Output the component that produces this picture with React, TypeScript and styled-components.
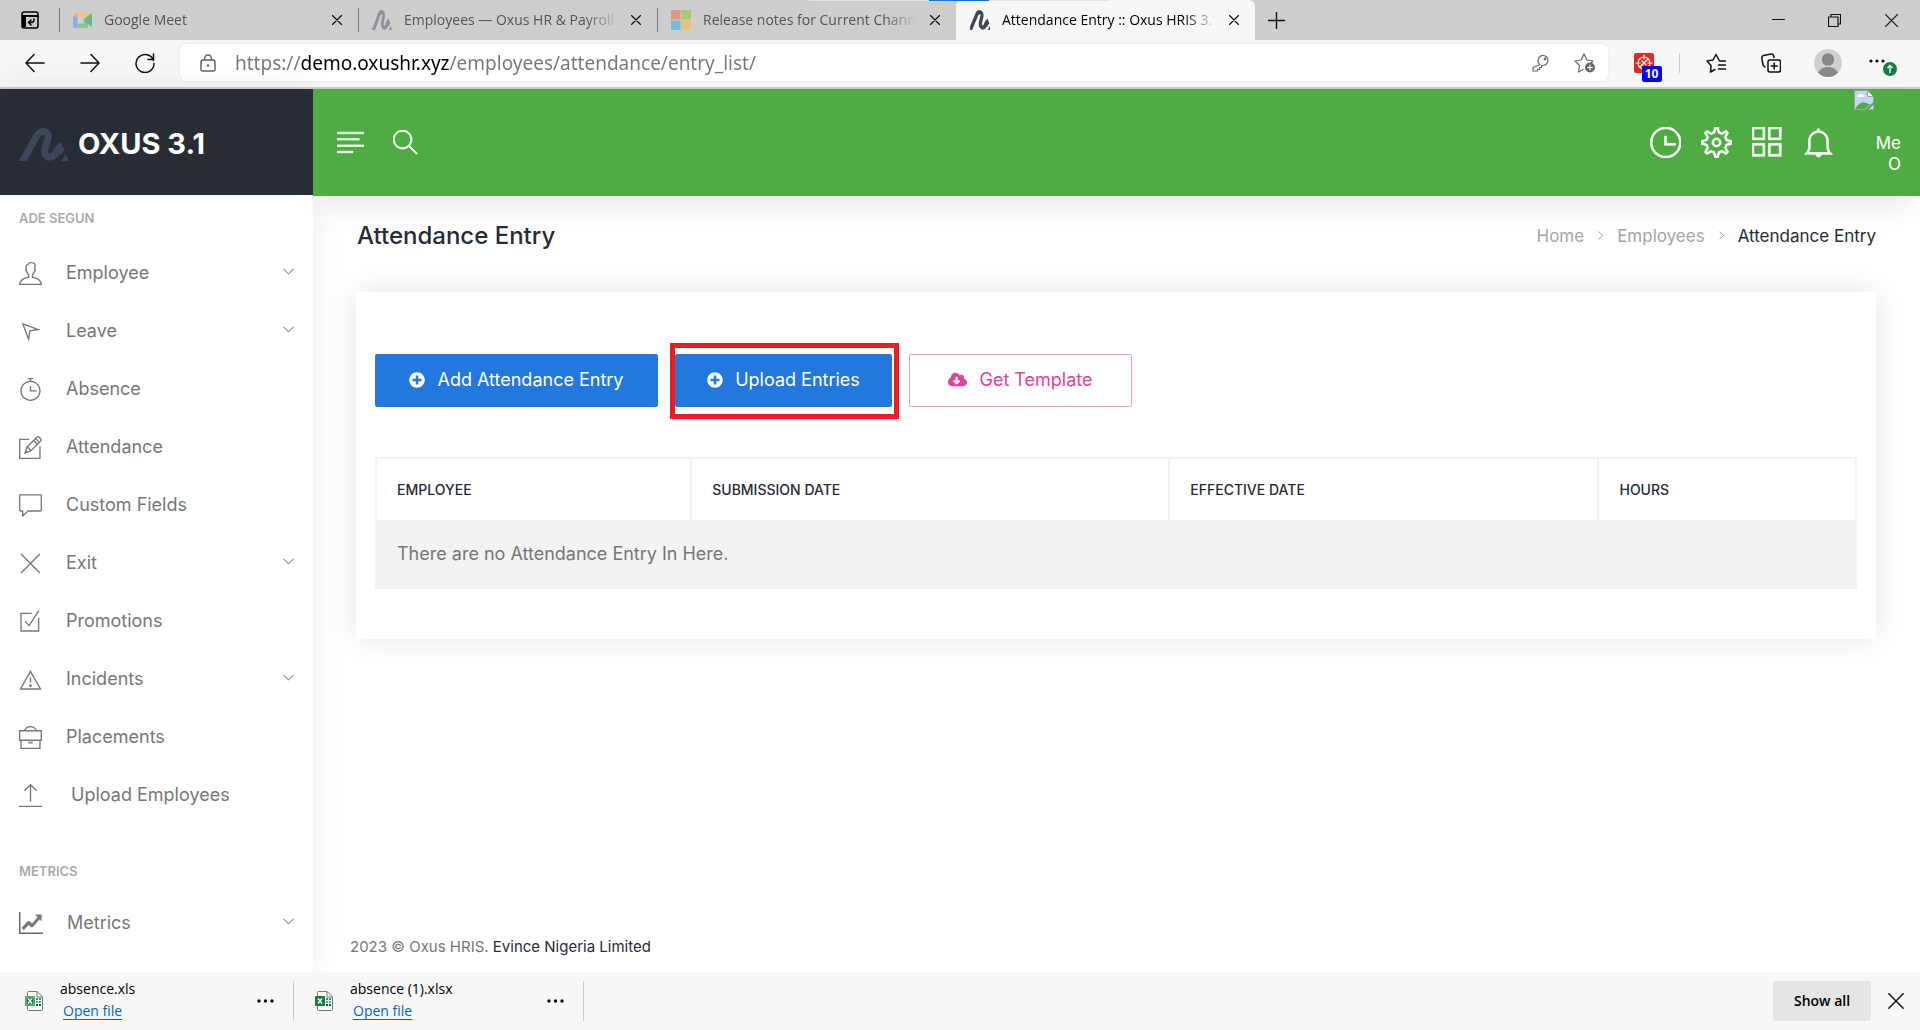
import React, { useState } from 'react';
import styled, { createGlobalStyle, css } from 'styled-components';
import {
  TfiUser, TfiLocationArrow, TfiTimer, TfiPencilAlt, TfiClose, TfiCheckBox, TfiAlert,
  TfiBriefcase, TfiUpload, TfiAngleDown, TfiAngleRight, TfiAlignLeft, TfiSearch, TfiTime,
  TfiSettings, TfiLayoutGrid2, TfiBell,
} from 'react-icons/tfi';
import { FaPlusCircle, FaCloudDownloadAlt } from 'react-icons/fa';

const ui = '"Open Sans", "Noto Sans", sans-serif';
const brand = 'Inter, "Open Sans", sans-serif';

const GlobalStyle = createGlobalStyle`
  *, *::before, *::after { box-sizing: border-box; }
  body { margin: 0; background: #fff; font-family: ${brand}; color: #777; }
  button { font: inherit; color: inherit; border: 0; background: none; padding: 0; cursor: pointer; }
  a { color: inherit; text-decoration: none; }
  svg { display: block; flex: none; }
`;

const Window = styled.div`
  min-height: 100vh;
  display: flex;
  flex-direction: column;
`;

/* ---------- browser frame ---------- */

const TabStrip = styled.div`
  position: relative;
  display: flex;
  align-items: stretch;
  height: 40px;
  background: #cdcdcd;
  font: 14px/20px ${ui};
  color: #555;
`;
const LoadStrip = styled.div`
  position: absolute;
  top: 0;
  left: 809px;
  width: 301px;
  height: 1px;
  background: linear-gradient(90deg, #e4e4e4 0 120px, #0a78d6 120px 180px, #e4e4e4 180px);
`;
const TabMenu = styled.button`
  width: 59px;
  display: grid;
  place-items: center;
  color: #000;
`;
const Tab = styled.div<{ $active?: boolean }>`
  position: relative;
  flex: 0 1 299px;
  min-width: 0;
  display: flex;
  align-items: center;
  padding: 0 11px 0 14px;
  ${p => p.$active
    ? css`background: #f7f7f7; color: #000; border-radius: 6px 6px 0 0;`
    : css`&::before { content: ''; position: absolute; left: 0; top: 8px; bottom: 8px; width: 1px; background: #777; }`}
`;
const TabTitle = styled.span`
  flex: 1;
  min-width: 0;
  margin: 0 8px 0 12px;
  white-space: nowrap;
  overflow: hidden;
  mask-image: linear-gradient(90deg, #000 calc(100% - 32px), transparent);
`;
const IconButton = styled.button<{ $w?: number }>`
  width: ${p => p.$w ?? 20}px;
  height: 100%;
  display: grid;
  place-items: center;
  flex: none;
  color: #111;
`;
const WindowButtons = styled.div`
  margin-left: auto;
  display: flex;
`;
const Toolbar = styled.div`
  display: flex;
  align-items: center;
  height: 49px;
  padding: 5px 9px 7px 7px;
  background: #f7f7f7;
  border-bottom: 2px solid #cbcbcf;
`;
const Address = styled.label`
  flex: 1;
  min-width: 0;
  height: 37px;
  margin-left: 8px;
  padding: 0 12px 0 20px;
  display: flex;
  align-items: center;
  background: #fff;
  border-radius: 6px;
  box-shadow: 0 0 3px rgba(0, 0, 0, 0.08);
  color: #666;
`;
/* The host part of the address is darker than its scheme and path. */
const AddressInput = styled.input`
  flex: 1;
  min-width: 0;
  height: 30px;
  margin: 0 24px 0 19px;
  border: 0;
  padding: 0;
  outline: 0;
  font: 19px/28px "Noto Sans", ${ui};
  color: transparent;
  -webkit-text-fill-color: transparent;
  background: linear-gradient(90deg, #777 0 66px, #000 66px 214px, #777 214px);
  -webkit-background-clip: text;
  background-clip: text;
`;
const AddressIcons = styled.span`
  display: flex;
  align-items: center;
  gap: 24px;
`;
const Extension = styled.span`
  position: relative;
`;
const Badge = styled.span`
  position: absolute;
  left: 8px;
  top: 13px;
  width: 20px;
  height: 16px;
  border-radius: 2px;
  background: #00f;
  color: #fff;
  font: 700 12px/16px ${ui};
  text-align: center;
`;
const Rule = styled.span`
  width: 1px;
  height: 20px;
  margin-right: 12px;
  background: #ccc;
`;

/* ---------- application ---------- */

const Shell = styled.div`
  flex: 1;
  display: grid;
  grid-template-columns: 313px minmax(0, 1fr);
`;
const Sidebar = styled.aside`
  position: relative;
  z-index: 2;
  background: #fff;
  box-shadow: 0 0 32px rgba(0, 0, 0, 0.08);
`;
const Logo = styled.a`
  display: flex;
  align-items: center;
  gap: 9px;
  height: 106px;
  padding: 4px 19px 0;
  background: #272c35;
  color: #fff;
  font-size: 29px;
  line-height: 40px;
  font-weight: 700;
`;
const NavHeading = styled.h2<{ $spaced?: boolean }>`
  margin: ${p => (p.$spaced ? 35 : 11)}px 0 0;
  padding: 0 19px;
  font-size: 13px;
  line-height: 24px;
  font-weight: 600;
  color: #aaa;
`;
const NavList = styled.ul<{ $top: number }>`
  list-style: none;
  margin: 0;
  padding: ${p => p.$top}px 0 0;
`;
const NavLink = styled.a`
  display: flex;
  align-items: center;
  gap: 24px;
  height: 58px;
  padding: 0 19px;
  font-size: 18px;
  line-height: 28px;
  color: #777;
  white-space: pre;
`;
const Chevron = styled(TfiAngleDown)`
  margin-left: auto;
  margin-bottom: 4px;
  stroke: currentColor;
  stroke-width: 0.5px;
`;
const Main = styled.div`
  display: flex;
  flex-direction: column;
  min-width: 0;
`;
const Header = styled.header`
  position: relative;
  z-index: 3;
  display: flex;
  justify-content: space-between;
  height: 107px;
  padding: 0 19px 0 24px;
  background: #4eac43;
  color: #fff;
  box-shadow: 0 16px 32px -8px rgba(0, 0, 0, 0.1);
`;
const HeaderGroup = styled.div<{ $gap: number }>`
  display: flex;
  align-items: center;
  gap: ${p => p.$gap}px;
  button svg { stroke: currentColor; stroke-width: 0.4px; }
`;
const Profile = styled.a`
  align-self: stretch;
  width: 47px;
  display: flex;
  flex-direction: column;
  padding-top: 1px;
  gap: 23px;
  font-size: 17px;
  line-height: 21px;
  text-align: right;
  span { padding-left: 16px; }
`;
const PageHead = styled.div`
  display: flex;
  justify-content: space-between;
  align-items: center;
  height: 96px;
  padding: 0 44px 17px;
`;
const Title = styled.h1`
  margin: 0;
  font-size: 24px;
  line-height: 32px;
  font-weight: 500;
  color: #272c35;
`;
const Crumbs = styled.nav`
  display: flex;
  align-items: center;
  gap: 12px;
  font-size: 17px;
  line-height: 24px;
  color: #a5a5a5;
  span { color: #272c35; }
  svg { stroke: #888; fill: #888; }
`;
const Card = styled.section`
  margin: 0 44px 0 43px;
  padding: 62px 19px 50px;
  border-radius: 3px;
  background: #fff;
  box-shadow: 0 0 32px rgba(0, 0, 0, 0.1);
`;
const Actions = styled.div`
  display: flex;
  gap: 17px;
  margin-bottom: 50px;
`;
const Action = styled.button<{ $outline?: boolean; $w: number }>`
  width: ${p => p.$w}px;
  height: 53px;
  display: flex;
  align-items: center;
  justify-content: center;
  gap: 12px;
  padding-bottom: 2px;
  border-radius: 2px;
  font-size: 18px;
  line-height: 24px;
  white-space: nowrap;
  ${p => p.$outline
    ? css`border: 1px solid #ee9cc8; color: #dd4398; background: #fff;`
    : css`background: #2378df; color: #fff;`}
`;
const Marked = styled.div`
  position: relative;
  &::after {
    content: '';
    position: absolute;
    inset: -11px -7px -12px -5px;
    border: 5px solid #ed1c24;
    pointer-events: none;
  }
`;
const Table = styled.table`
  width: 100%;
  table-layout: fixed;
  border-collapse: collapse;
  text-align: left;
  th {
    height: 63px;
    padding: 0 20px;
    border: 2px solid #f3f3f3;
    font-size: 14px;
    line-height: 20px;
    font-weight: 500;
    color: #272c35;
  }
  td {
    height: 67px;
    padding: 0 20px 2px;
    border: 2px solid #f3f3f3;
    background: #f3f3f3;
    font-size: 18px;
    line-height: 24px;
  }
`;
const Footer = styled.footer`
  margin-top: auto;
  padding: 0 37px 13px;
  font-size: 15px;
  line-height: 24px;
  a { color: #272c35; }
`;

/* ---------- downloads ---------- */

const Downloads = styled.div`
  position: relative;
  z-index: 4;
  display: flex;
  align-items: center;
  height: 58px;
  background: #f7f7f7;
  color: #000;
  font: 14px/20px ${ui};
`;
const Download = styled.div`
  width: 294px;
  height: 40px;
  display: flex;
  align-items: center;
  padding-left: 25px;
  border-right: 1px solid #ccc;
  & + & { width: 290px; padding-left: 21px; }
`;
const FileText = styled.div`
  flex: 1;
  margin-left: 17px;
  padding-bottom: 2px;
  line-height: 22px;
  a { margin-left: 3px; color: #0067c0; text-decoration: underline; text-underline-offset: 3px; }
`;
const ShowAll = styled.button`
  width: 98px;
  height: 40px;
  margin-left: auto;
  border-radius: 2px;
  background: #e5e5e5;
  font-weight: 600;
`;

/* ---------- drawings ---------- */

type SvgProps = { w: number; h?: number; box?: string; sw?: number; children: React.ReactNode };
const Svg = ({ w, h = w, box, children, sw = 1.5 }: SvgProps) => (
  <svg width={w} height={h} viewBox={box ?? `0 0 ${w} ${h}`} fill="none" stroke="currentColor" strokeWidth={sw} strokeLinecap="round" strokeLinejoin="round" aria-hidden="true">
    {children}
  </svg>
);
const OxusMark = ({ w, h, color, box = '0 0 50 33' }: { w: number; h: number; color: string; box?: string }) => (
  <svg width={w} height={h} viewBox={box} preserveAspectRatio="none" fill="none" aria-hidden="true">
    <path d="M2 36L17.500 8.500C21 1 31 2.500 29 10.500L26 20.500C24 29.500 32.500 31.500 36 26L40.500 19" stroke={color} strokeWidth="7" />
    <path d="M37 19L41 13.500L45.500 22L39.500 29Z" fill={color} />
    <path d="M46.500 26L50 33H42.500Z" fill={color} />
  </svg>
);
const Cross = ({ size = 10 }: { size?: number }) => (
  <Svg w={size} box="0 0 10 10" sw={size > 12 ? 0.9 : 1.3}><path d="M0.500 0.500L9.500 9.500M9.500 0.500L0.500 9.500" /></Svg>
);
const MeetMark = () => (
  <svg width="19" height="16" viewBox="0 0 19 16" aria-hidden="true">
    <path d="M0 4.500L4.500 0V4.500Z" fill="#e8a09a" />
    <path d="M4.500 0H13Q15 0 15 2V6L10.500 8V4.500H4.500Z" fill="#e9c878" />
    <path d="M0 4.500H4.500V16H2Q0 16 0 14Z" fill="#86aee6" />
    <path d="M4.500 11.500H10.500V8L15 10V14Q15 16 13 16H4.500Z" fill="#86c79a" />
    <path d="M10.500 8L17.500 1.500Q19 1 19 2.500V13.500Q19 15 17.500 14.500Z" fill="#6fb488" />
  </svg>
);
const MicrosoftMark = () => (
  <svg width="20" height="20" viewBox="0 0 20 20" aria-hidden="true">
    <path d="M0 0H9.500V9.500H0Z" fill="#e39583" /><path d="M10.500 0H20V9.500H10.500Z" fill="#adc873" />
    <path d="M0 10.500H9.500V20H0Z" fill="#74badc" /><path d="M10.500 10.500H20V20H10.500Z" fill="#e6c673" />
  </svg>
);
const Ellipsis = () => (
  <svg width="17" height="4" viewBox="0 0 17 4" fill="currentColor" aria-hidden="true">
    <circle cx="2" cy="2" r="1.700" /><circle cx="8.500" cy="2" r="1.700" /><circle cx="15" cy="2" r="1.700" />
  </svg>
);
const SheetMark = ({ old }: { old?: boolean }) => (
  <svg width="18" height="20" viewBox="0 0 18 20" fill="none" aria-hidden="true">
    <path d="M2.500 5V1.500Q2.500 .5 3.500 .5H12L17.500 6V18.500Q17.500 19.500 16.500 19.500H3.500Q2.500 19.500 2.500 18.500V15" fill="#fff" stroke="#777" />
    <path d="M12 .5V6H17.500" stroke="#777" />
    <path d="M11 7H13V9H11ZM14 7H16V9H14Z" fill="#21a366" /><path d="M11 10H13V12H11ZM14 10H16V12H14Z" fill="#33c481" /><path d="M11 13H13V15H11ZM14 13H16V15H14Z" fill="#185c37" />
    <rect x="0" y="5" width="10" height="10" rx="1" fill="#107c41" />
    {old && <rect x="1" y="6" width="8" height="8" stroke="#fff" strokeWidth=".6" />}
    <path d="M3 7.500L7 12.500M7 7.500L3 12.500" stroke="#fff" strokeWidth="1.400" />
  </svg>
);
const BrokenImage = () => (
  <svg width="20" height="20" viewBox="0 0 20 20" aria-hidden="true">
    <path d="M.5 .5H13.500L19.500 6.500V12L13 18L11 19.500H.5Z" fill="#c4d6f5" stroke="#a0a0a0" />
    <path d="M13.500 .5V6.500H19.500Z" fill="#fff" stroke="#a0a0a0" />
    <path d="M3 7Q3 5 5 5Q6 3 8 4Q10 4 10 7Z" fill="#fff" />
    <path d="M1 19Q6 11 11 12.500L16 14.500L11 19Z" fill="#4eac43" />
    <path d="M16 18L19.500 14.500V19.500H15Z" fill="#c4d6f5" stroke="#a0a0a0" strokeWidth=".7" />
  </svg>
);
const CommentIcon = ({ size = 23 }: { size?: number }) => (
  <Svg w={size} box="0 0 23 23" sw={1.3}><path d="M1.500 .8H21.500Q22.300 .8 22.300 1.600V16.200Q22.300 17 21.500 17H9L3.700 22V17H1.500Q.7 17 .7 16.200V1.600Q.7 .8 1.500 .8Z" /></Svg>
);
const StatsIcon = () => (
  <svg width="24" height="22" viewBox="0 0 26 22" preserveAspectRatio="none" fill="none" stroke="#777" aria-hidden="true">
    <path d="M.8 0V21.200H26" stroke="#666" strokeWidth="1.600" />
    <path d="M4 17L10.500 10.500L14 14L21.500 6" strokeWidth="3.200" strokeLinejoin="bevel" />
    <path d="M17.500 2.500H24.500V9.500Z" fill="#777" stroke="none" />
  </svg>
);

const navItems = [
  { label: 'Employee', icon: TfiUser, more: true },
  { label: 'Leave', icon: TfiLocationArrow, more: true },
  { label: 'Absence', icon: TfiTimer },
  { label: 'Attendance', icon: TfiPencilAlt },
  { label: 'Custom Fields', icon: CommentIcon },
  { label: 'Exit', icon: TfiClose, more: true },
  { label: 'Promotions', icon: TfiCheckBox },
  { label: 'Incidents', icon: TfiAlert, more: true },
  { label: 'Placements', icon: TfiBriefcase },
  { label: ' Upload Employees', icon: TfiUpload },
];

const tabs = [
  { title: 'Google Meet', mark: <MeetMark /> },
  { title: 'Employees — Oxus HR & Payroll', mark: <OxusMark w={20} h={20} color="#8d939e" /> },
  { title: 'Release notes for Current Channel', mark: <MicrosoftMark /> },
  { title: 'Attendance Entry :: Oxus HRIS 3.1', mark: <OxusMark w={20} h={20} color="#3d475a" box="3 0 44 33" />, active: true },
];

export default function App() {
  const [url, setUrl] = useState('https://demo.oxushr.xyz/employees/attendance/entry_list/');
  return (
    <Window>
      <GlobalStyle />
      <TabStrip>
        <TabMenu aria-label="Tab actions">
          <Svg w={18}>
            <rect x="1" y="1" width="16" height="16" rx="2" /><path d="M1 5H17" strokeWidth="2" /><path d="M3 5V16" strokeWidth="4" strokeLinecap="butt" />
            <path d="M13 8V9Q13 11.500 10 11.500H8M10 9L7.500 11.500L10 14" />
          </Svg>
        </TabMenu>
        {tabs.map(t => (
          <Tab key={t.title} $active={t.active}>
            {t.mark}
            <TabTitle>{t.title}</TabTitle>
            <IconButton aria-label="Close tab"><Cross /></IconButton>
          </Tab>
        ))}
        <IconButton $w={43} aria-label="New tab"><Svg w={17} sw={1.4}><path d="M8.500 0.500V16.500M0.500 8.500H16.500" /></Svg></IconButton>
        <WindowButtons>
          <IconButton $w={56} aria-label="Minimize"><Svg w={13} sw={1}><path d="M0 5.500H13" /></Svg></IconButton>
          <IconButton $w={56} aria-label="Restore"><Svg w={13} sw={1.2}><path d="M.5 3H10V12.500H.5ZM3 3V.5H12.500V10H10" /></Svg></IconButton>
          <IconButton $w={58} aria-label="Close window"><Cross size={13} /></IconButton>
        </WindowButtons>
        <LoadStrip />
      </TabStrip>

      <Toolbar>
        <IconButton $w={55} aria-label="Back"><Svg w={20}><path d="M19 10H1M9 1.500L1 10L9 18.500" /></Svg></IconButton>
        <IconButton $w={55} aria-label="Forward"><Svg w={20}><path d="M1 10H19M11 1.500L19 10L11 18.500" /></Svg></IconButton>
        <IconButton $w={55} aria-label="Reload"><Svg w={20}><path d="M18.500 7.500A9 9 0 1 0 19 10.500M18.500 1V6.500H13" /></Svg></IconButton>
        <Address>
          <Svg w={16} h={18}><rect x="1" y="6" width="14" height="11" rx="2" /><path d="M4.500 6V4.500A3.500 3.500 0 0 1 11.500 4.500V6" /><circle cx="8" cy="11.500" r=".6" fill="currentColor" /></Svg>
          <AddressInput aria-label="Address" value={url} onChange={e => setUrl(e.target.value)} spellCheck={false} />
          <AddressIcons>
            <Svg w={18} sw={1.2}><path d="M8 10.500A5 5 0 1 1 11 11.500L9.500 11.500V13.500H7.500V15.500H5.500V17H1V13.500Z" /><circle cx="13" cy="5" r=".8" /></Svg>
            <Svg w={22} sw={1.2}><path d="M9 17.500L4.500 20L5.500 13.500L1 9L7 8L10 2L13 8L19 9L17 11" /><circle cx="16" cy="15.500" r="5" fill="currentColor" stroke="none" /><path d="M16 13V18M13.500 15.500H18.500" stroke="#fff" /></Svg>
          </AddressIcons>
        </Address>
        <IconButton $w={71} aria-label="Extension">
          <Extension>
            <Svg w={20}><rect x="0" y="0" width="20" height="20" rx="2" fill="#e8261c" stroke="none" /><g stroke="#fff" strokeWidth="1.200"><circle cx="10" cy="10" r="6" /><path d="M10 2V6M2 10H6M18 10H14M6 14L14 6M8 8L12 12" /></g></Svg>
            <Badge>10</Badge>
          </Extension>
        </IconButton>
        <Rule />
        <IconButton $w={48} aria-label="Favorites"><Svg w={20}><path d="M13 7L10 1.500L7 7L1 8L5 12.500L4.500 19L9 16.500M13.500 8H19.500M12.500 12H19.500M12.500 16H19.500" /></Svg></IconButton>
        <IconButton $w={61} aria-label="Collections"><Svg w={20}><rect x="7" y="7" width="12.500" height="12" rx="2" /><path d="M13.200 10V16M10.200 13H16.200M4 14L2 12L.8 5Q.7 3 2.500 2.500L10 1Q12 .8 12.500 2.500L13 4.500" /></Svg></IconButton>
        <IconButton $w={54} aria-label="Profile">
          <svg width="28" height="28" viewBox="0 0 28 28" aria-hidden="true"><circle cx="14" cy="14" r="14" fill="#d2d0ce" /><circle cx="14" cy="10.500" r="6.300" fill="#8a8886" /><path d="M4 23.500Q7 18 14 18T24 23.500Q20 28 14 28T4 23.500Z" fill="#8a8886" /></svg>
        </IconButton>
        <IconButton $w={56} aria-label="Settings and more">
          <svg width="30" height="28" viewBox="0 0 30 28" fill="currentColor" aria-hidden="true"><circle cx="3" cy="12" r="1.600" /><circle cx="9" cy="12" r="1.600" /><circle cx="15" cy="12" r="1.600" /><circle cx="22" cy="20" r="7" fill="#118038" /><path d="M22 24V16.500M19.500 19L22 16.500L24.500 19" stroke="#fff" strokeWidth="1.300" fill="none" /></svg>
        </IconButton>
      </Toolbar>

      <Shell>
        <Sidebar>
          <Logo href="#"><OxusMark w={50} h={33} color="#3d475a" />OXUS 3.1</Logo>
          <NavHeading>ADE SEGUN</NavHeading>
          <NavList $top={14}>
            {navItems.map(({ label, icon: Icon, more }) => (
              <li key={label}><NavLink href="#"><Icon size={23} />{label}{more && <Chevron size={11} />}</NavLink></li>
            ))}
          </NavList>
          <NavHeading $spaced>METRICS</NavHeading>
          <NavList $top={11}>
            <li><NavLink href="#"><StatsIcon />Metrics<Chevron size={11} /></NavLink></li>
          </NavList>
        </Sidebar>

        <Main>
          <Header>
            <HeaderGroup $gap={29}>
              <button aria-label="Toggle menu"><TfiAlignLeft size={27} /></button>
              <button aria-label="Search"><TfiSearch size={25} /></button>
            </HeaderGroup>
            <HeaderGroup $gap={20}>
              <button aria-label="Time"><TfiTime size={31} /></button>
              <button aria-label="Settings"><TfiSettings size={31} /></button>
              <button aria-label="Apps"><TfiLayoutGrid2 size={31} /></button>
              <button aria-label="Notifications"><TfiBell size={31} /></button>
              <Profile href="#"><BrokenImage /><span>Me O</span></Profile>
            </HeaderGroup>
          </Header>

          <PageHead>
            <Title>Attendance Entry</Title>
            <Crumbs aria-label="Breadcrumb">
              <a href="#">Home</a><TfiAngleRight size={9} /><a href="#">Employees</a><TfiAngleRight size={9} /><span>Attendance Entry</span>
            </Crumbs>
          </PageHead>

          <Card>
            <Actions>
              <Action $w={283}><FaPlusCircle size={16} />Add Attendance Entry</Action>
              <Marked><Action $w={217}><FaPlusCircle size={16} />Upload Entries</Action></Marked>
              <Action $outline $w={223}><FaCloudDownloadAlt size={19} />Get Template</Action>
            </Actions>
            <Table>
              <colgroup><col width="21.3%" /><col width="32.3%" /><col width="29%" /><col /></colgroup>
              <thead><tr><th>EMPLOYEE</th><th>SUBMISSION DATE</th><th>EFFECTIVE DATE</th><th>HOURS</th></tr></thead>
              <tbody><tr><td colSpan={4}>There are no Attendance Entry In Here.</td></tr></tbody>
            </Table>
          </Card>

          <Footer>2023 © Oxus HRIS. <a href="#">Evince Nigeria Limited</a></Footer>
        </Main>
      </Shell>

      <Downloads>
        <Download><SheetMark old /><FileText><div>absence.xls</div><a href="#">Open file</a></FileText><IconButton $w={56} aria-label="More"><Ellipsis /></IconButton></Download>
        <Download><SheetMark /><FileText><div>absence (1).xlsx</div><a href="#">Open file</a></FileText><IconButton $w={56} aria-label="More"><Ellipsis /></IconButton></Download>
        <ShowAll>Show all</ShowAll>
        <IconButton $w={49} aria-label="Close downloads"><Cross size={16} /></IconButton>
      </Downloads>
    </Window>
  );
}
